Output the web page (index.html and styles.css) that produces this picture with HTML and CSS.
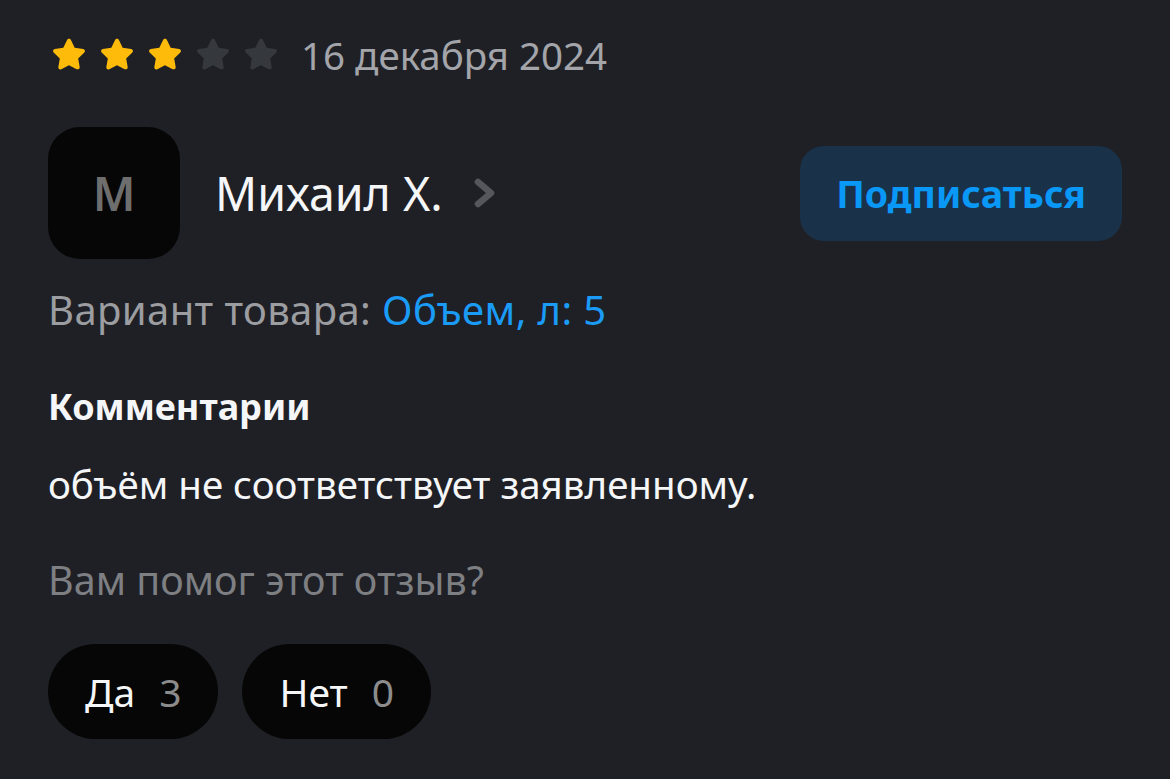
FILE: index.html
```html
<!DOCTYPE html>
<html lang="ru">
<head>
  <meta charset="UTF-8">
  <meta name="viewport" content="width=device-width, initial-scale=1.0">
  <title>Отзыв</title>
  <link rel="stylesheet" href="styles.css">
</head>
<body>
  <div class="review">
    <div class="rating">
      <div class="stars">
        <svg class="star on" viewBox="0 0 24 24"><path d="M12 2.2c.5 0 .9.3 1.1.7l2.3 4.7 5.1.8c1 .1 1.4 1.4.7 2.1l-3.7 3.6.9 5.1c.2 1-.9 1.7-1.8 1.3L12 18.1l-4.6 2.4c-.9.5-2-.3-1.8-1.3l.9-5.1-3.7-3.6c-.7-.7-.3-2 .7-2.1l5.1-.8 2.3-4.7c.2-.4.6-.7 1.1-.7z"/></svg>
        <svg class="star on" viewBox="0 0 24 24"><path d="M12 2.2c.5 0 .9.3 1.1.7l2.3 4.7 5.1.8c1 .1 1.4 1.4.7 2.1l-3.7 3.6.9 5.1c.2 1-.9 1.7-1.8 1.3L12 18.1l-4.6 2.4c-.9.5-2-.3-1.8-1.3l.9-5.1-3.7-3.6c-.7-.7-.3-2 .7-2.1l5.1-.8 2.3-4.7c.2-.4.6-.7 1.1-.7z"/></svg>
        <svg class="star on" viewBox="0 0 24 24"><path d="M12 2.2c.5 0 .9.3 1.1.7l2.3 4.7 5.1.8c1 .1 1.4 1.4.7 2.1l-3.7 3.6.9 5.1c.2 1-.9 1.7-1.8 1.3L12 18.1l-4.6 2.4c-.9.5-2-.3-1.8-1.3l.9-5.1-3.7-3.6c-.7-.7-.3-2 .7-2.1l5.1-.8 2.3-4.7c.2-.4.6-.7 1.1-.7z"/></svg>
        <svg class="star" viewBox="0 0 24 24"><path d="M12 2.2c.5 0 .9.3 1.1.7l2.3 4.7 5.1.8c1 .1 1.4 1.4.7 2.1l-3.7 3.6.9 5.1c.2 1-.9 1.7-1.8 1.3L12 18.1l-4.6 2.4c-.9.5-2-.3-1.8-1.3l.9-5.1-3.7-3.6c-.7-.7-.3-2 .7-2.1l5.1-.8 2.3-4.7c.2-.4.6-.7 1.1-.7z"/></svg>
        <svg class="star" viewBox="0 0 24 24"><path d="M12 2.2c.5 0 .9.3 1.1.7l2.3 4.7 5.1.8c1 .1 1.4 1.4.7 2.1l-3.7 3.6.9 5.1c.2 1-.9 1.7-1.8 1.3L12 18.1l-4.6 2.4c-.9.5-2-.3-1.8-1.3l.9-5.1-3.7-3.6c-.7-.7-.3-2 .7-2.1l5.1-.8 2.3-4.7c.2-.4.6-.7 1.1-.7z"/></svg>
      </div>
      <span class="date">16 декабря 2024</span>
    </div>

    <div class="author">
      <div class="avatar">M</div>
      <a class="name" href="#">Михаил Х.
        <svg class="chevron" viewBox="0 0 22 30"><path d="M4 4l13 11L4 26"/></svg>
      </a>
      <button class="subscribe">Подписаться</button>
    </div>

    <p class="variant">Вариант товара: <span class="variant-value">Объем, л: 5</span></p>

    <h3 class="comment-title">Комментарии</h3>
    <p class="comment-text">объём не соответствует заявленному.</p>

    <p class="helpful">Вам помог этот отзыв?</p>
    <div class="votes">
      <button class="vote">Да <span class="count">3</span></button>
      <button class="vote">Нет <span class="count">0</span></button>
    </div>
  </div>
</body>
</html>
```

FILE: styles.css
```css
*, *::before, *::after { box-sizing: border-box; margin: 0; padding: 0; }
html, body { height: 100%; }
body {
  background: #1f2025;
  font-family: 'Noto Sans', 'Lato', sans-serif;
  color: #f5f6f8;
}
.review { padding: 20px 48px 0 48px; }

.rating { display: flex; align-items: center; height: 70px; }
.stars { display: flex; gap: 8px; margin-left: 1px; }
.star { width: 40px; height: 40px; fill: #35383d; }
.star.on { fill: #ffbb0a; }
.date { margin-left: 20px; font-size: 38.5px; color: #a3a5aa; }

.author { display: flex; align-items: center; margin-top: 37px; }
.avatar {
  width: 132px; height: 132px; border-radius: 32px; background: #060606;
  display: flex; align-items: center; justify-content: center;
  font-size: 46px; font-weight: 600; color: #6e6e6e;
}
.name {
  display: flex; align-items: center; gap: 31px;
  margin-left: 35px; font-size: 46.5px; color: #f5f6f8; text-decoration: none;
}
.chevron { width: 22px; height: 30px; fill: none; stroke: #55575c; stroke-width: 6.5; stroke-linecap: round; stroke-linejoin: round; }
.subscribe {
  margin-left: auto; width: 322px; height: 95px; border: none; border-radius: 24px;
  background: #19324a; color: #0a98f7; font-family: inherit; font-size: 37.5px; font-weight: 700;
}

.variant, .comment-title, .comment-text, .helpful { line-height: 50px; }
.variant { margin-top: 26px; font-size: 40px; letter-spacing: 0.4px; color: #9b9da1; }
.variant-value { color: #1a9bf6; }

.comment-title { margin-top: 47px; font-size: 36px; font-weight: 700; color: #f5f6f8; }
.comment-text { margin-top: 27px; font-size: 38.5px; color: #f5f6f8; }

.helpful { margin-top: 46px; font-size: 39.5px; color: #7d7f83; }

.votes { display: flex; gap: 24px; margin-top: 39px; }
.vote {
  display: flex; align-items: center; gap: 24px; height: 95px; padding: 0 37px;
  border: none; border-radius: 48px; background: #060606;
  font-family: inherit; font-size: 39px; color: #f5f6f8;
}
.count { color: #8c8c8c; }
```
